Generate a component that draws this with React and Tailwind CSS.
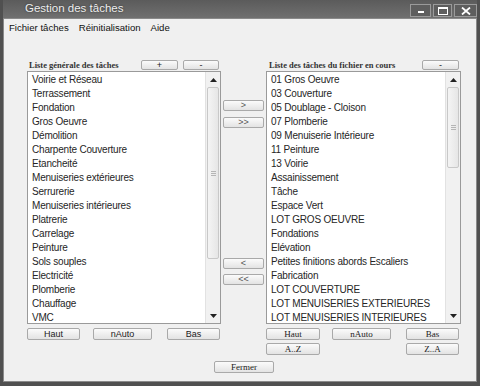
import React from "react";

const GENERAL = [
  "Voirie et Réseau",
  "Terrassement",
  "Fondation",
  "Gros Oeuvre",
  "Démolition",
  "Charpente Couverture",
  "Etancheité",
  "Menuiseries extérieures",
  "Serrurerie",
  "Menuiseries intérieures",
  "Platrerie",
  "Carrelage",
  "Peinture",
  "Sols souples",
  "Electricité",
  "Plomberie",
  "Chauffage",
  "VMC",
];

const FICHIER = [
  "01 Gros Oeuvre",
  "03 Couverture",
  "05 Doublage - Cloison",
  "07 Plomberie",
  "09 Menuiserie Intérieure",
  "11 Peinture",
  "13 Voirie",
  "Assainissement",
  "Tâche",
  "Espace Vert",
  "LOT GROS OEUVRE",
  "Fondations",
  "Elévation",
  "Petites finitions abords Escaliers",
  "Fabrication",
  "LOT COUVERTURE",
  "LOT MENUISERIES EXTERIEURES",
  "LOT MENUISERIES INTERIEURES",
];

const sans = { fontFamily: '"Liberation Sans", Arial, sans-serif' };
const serif = { fontFamily: '"Liberation Serif", "Times New Roman", serif' };

function Btn({ children, className = "", font = "sans" }) {
  return (
    <button
      style={font === "serif" ? serif : sans}
      className={`flex items-center justify-center rounded-[2px] border border-[#a9a9a9] bg-gradient-to-b from-[#fbfbfb] to-[#e3e3e3] text-[9px] leading-none text-[#222] ${className}`}
    >
      {children}
    </button>
  );
}

function ScrollBar({ thumbH }) {
  return (
    <div className="flex w-[15px] flex-col border-l border-[#e2e2e2] bg-[#f1f1f1]">
      <div className="flex h-[15px] items-center justify-center">
        <svg width="7" height="4" viewBox="0 0 7 4">
          <path d="M0 4 L3.5 0 L7 4 Z" fill="#222" />
        </svg>
      </div>
      <div
        className="mx-[1px] flex flex-col items-center justify-center gap-[1px] rounded-[2px] border border-[#c8c8c8] bg-gradient-to-r from-[#f4f4f4] to-[#e6e6e6]"
        style={{ height: thumbH }}
      >
        <div className="h-px w-[5px] bg-[#b5b5b5]" />
        <div className="h-px w-[5px] bg-[#b5b5b5]" />
        <div className="h-px w-[5px] bg-[#b5b5b5]" />
      </div>
      <div className="flex-1" />
      <div className="flex h-[15px] items-center justify-center">
        <svg width="7" height="4" viewBox="0 0 7 4">
          <path d="M0 0 L3.5 4 L7 0 Z" fill="#222" />
        </svg>
      </div>
    </div>
  );
}

function ListBox({ items, thumbH }) {
  return (
    <div className="flex h-[253px] border border-[#9a9a9a] bg-white">
      <div className="flex-1 overflow-hidden pl-[4px] pt-[1px]">
        {items.map((t) => (
          <div
            key={t}
            style={sans}
            className="h-[14px] whitespace-nowrap text-[10px] leading-[14px] tracking-[-0.2px] text-[#262626]"
          >
            {t}
          </div>
        ))}
      </div>
      <ScrollBar thumbH={thumbH} />
    </div>
  );
}

export default function App() {
  return (
    <div className="flex h-[386px] w-[480px] flex-col bg-[#505050] px-[3px] pb-[4px]">
      {/* title bar */}
      <div className="flex h-[18px] items-center bg-gradient-to-b from-[#5b5b5b] to-[#707070]">
        <span
          style={sans}
          className="ml-[22px] text-[11.5px] text-[#eeeeee] [text-shadow:0_0_2px_#333]"
        >
          Gestion des tâches
        </span>
        <div className="ml-auto flex gap-[2px] self-start pt-[4px]">
          <div className="flex h-[13px] w-[21px] items-end justify-center border border-[#9a9a9a] bg-[#5e5e5e] pb-[3px]">
            <div className="h-[2px] w-[6px] bg-white" />
          </div>
          <div className="flex h-[13px] w-[19px] items-center justify-center border border-[#9a9a9a] bg-[#5e5e5e]">
            <div className="h-[8px] w-[10px] border border-t-2 border-white" />
          </div>
          <div className="flex h-[13px] w-[23px] items-center justify-center border border-[#9a9a9a] bg-[#5e5e5e]">
            <svg width="10" height="8" viewBox="0 0 10 8">
              <path d="M1 0.5 L9 7.5 M9 0.5 L1 7.5" stroke="#fff" strokeWidth="1.8" />
            </svg>
          </div>
        </div>
      </div>

      {/* client area */}
      <div className="flex flex-1 flex-col border border-[#8a8a8a] bg-[#f0f0f0]">
        {/* menu */}
        <div style={sans} className="flex h-[18px] items-center gap-[10px] pl-[5px] text-[9.6px] text-[#111]">
          <span>Fichier tâches</span>
          <span>Réinitialisation</span>
          <span>Aide</span>
        </div>

        <div className="mt-[22px] flex pl-[23px]">
          {/* left column */}
          <div className="flex w-[194px] flex-col">
            <div className="flex h-[12px] items-center">
              <span style={serif} className="ml-[2px] text-[8.5px] font-bold text-[#333]">
                Liste générale des tâches
              </span>
              <Btn className="ml-auto h-[10px] w-[37px]">+</Btn>
              <Btn className="ml-[5px] mr-[2px] h-[10px] w-[36px]">-</Btn>
            </div>
            <ListBox items={GENERAL} thumbH={172} />
            <div className="mt-[4px] flex">
              <Btn className="h-[12px] w-[53px]">Haut</Btn>
              <Btn className="ml-[13px] h-[12px] w-[59px]">nAuto</Btn>
              <Btn className="ml-[15px] h-[12px] w-[53px]">Bas</Btn>
            </div>
          </div>

          {/* middle buttons */}
          <div className="flex w-[45px] flex-col pl-[2px] pr-[2px] pt-[41px]">
            <Btn className="h-[11px] w-[41px] text-[#555]">&gt;</Btn>
            <Btn className="mt-[6px] h-[11px] w-[41px] text-[#555]">&gt;&gt;</Btn>
            <Btn className="mt-[130px] h-[11px] w-[41px] text-[#555]">&lt;</Btn>
            <Btn className="mt-[5px] h-[11px] w-[41px] text-[#555]">&lt;&lt;</Btn>
          </div>

          {/* right column */}
          <div className="flex w-[195px] flex-col">
            <div className="flex h-[12px] items-center">
              <span style={serif} className="ml-[3px] text-[8.5px] font-bold text-[#333]">
                Liste des tâches du fichier en cours
              </span>
              <Btn className="ml-auto mr-[2px] h-[10px] w-[37px]">-</Btn>
            </div>
            <ListBox items={FICHIER} thumbH={81} />
            <div className="mt-[4px] flex">
              <Btn font="serif" className="h-[12px] w-[54px]">Haut</Btn>
              <Btn font="serif" className="ml-[12px] h-[12px] w-[59px]">nAuto</Btn>
              <Btn font="serif" className="ml-[15px] h-[12px] w-[53px]">Bas</Btn>
            </div>
            <div className="mt-[3px] flex">
              <Btn font="serif" className="h-[12px] w-[54px]">A..Z</Btn>
              <Btn font="serif" className="ml-auto mr-[2px] h-[12px] w-[53px]">Z..A</Btn>
            </div>
          </div>
        </div>

        <div className="mt-[6px] flex pl-[210px]">
          <Btn font="serif" className="h-[12px] w-[60px]">Fermer</Btn>
        </div>
      </div>
    </div>
  );
}
